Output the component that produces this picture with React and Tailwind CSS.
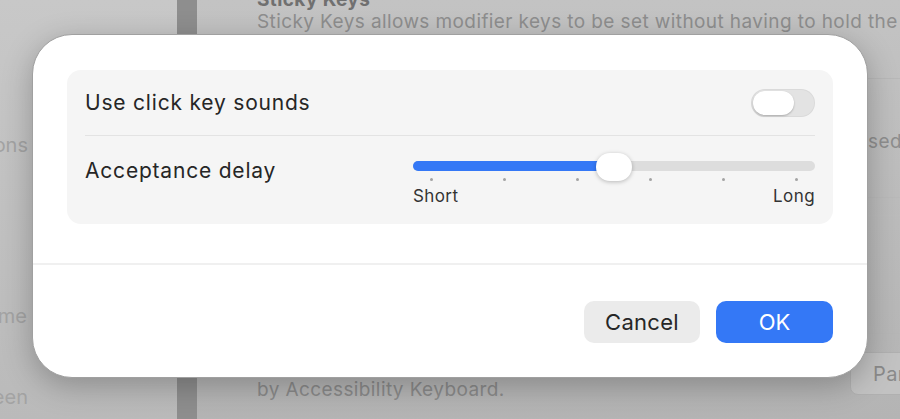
import React from 'react';

const font = { fontFamily: 'Inter, "Noto Sans", sans-serif' };

function Toggle() {
    return (
        <div className="w-[64px] h-[28px] rounded-full bg-[#e3e3e3] flex items-center px-[2px] shadow-[inset_0_0_0_1px_rgba(0,0,0,0.04)]">
            <div className="w-[41px] h-[24px] rounded-full bg-white shadow-[0_1px_2px_rgba(0,0,0,0.25)]"></div>
        </div>
    );
}

function Slider() {
    const ticks = [0, 1, 2, 3, 4, 5];
    return (
        <div className="flex flex-col w-[402px]">
            <div className="relative h-[24px]">
                <div className="absolute left-0 right-0 top-[8px] h-[10px] rounded-full bg-[#dddddd]"></div>
                <div className="absolute left-0 top-[8px] h-[10px] w-1/2 rounded-full bg-[#3478f6]"></div>
                <div className="absolute left-[183px] top-0 w-[36px] h-[28px] rounded-full bg-white shadow-[0_1px_4px_rgba(0,0,0,0.25)]"></div>
            </div>
            <div className="flex justify-between px-[17px] mt-[1px] h-[3px]">
                {ticks.map((t) => (
                    <div key={t} className="w-[3px] h-[3px] rounded-full bg-[#a3a3a3]"></div>
                ))}
            </div>
            <div className="flex justify-between mt-[5px] text-[17px] leading-[20px] tracking-[0.4px] text-[#333333]">
                <span>Short</span>
                <span>Long</span>
            </div>
        </div>
    );
}

export default function App() {
    return (
        <div className="relative w-[900px] h-[419px] overflow-hidden" style={font}>
            {/* dimmed settings window behind */}
            <div className="flex h-full">
                <div className="w-[177px] bg-gradient-to-b from-[#c8c8c8] to-[#bababa] flex flex-col text-[20px] leading-[28px] text-[#a3a3a3]">
                    <div className="mt-[131px] ml-[-72px] w-[100px] text-right">Captions</div>
                    <div className="mt-[143px] ml-[-73px] w-[100px] text-right">Home</div>
                    <div className="mt-[53px] ml-[-72px] w-[100px] text-right">Screen</div>
                </div>
                <div className="w-[20px] bg-[#8e8e8e]"></div>
                <div className="flex-1 bg-gradient-to-b from-[#c3c3c3] to-[#b4b4b4] flex flex-col text-[19px] leading-[24px] tracking-[0.4px]">
                    <div className="h-[36px] pl-[60px]">
                        <div className="mt-[-12px] font-bold text-[#707070] whitespace-nowrap">Sticky Keys</div>
                        <div className="mt-[-2px] text-[#8e8e8e] whitespace-nowrap">Sticky Keys allows modifier keys to be set without having to hold the</div>
                    </div>
                    <div className="h-[42px]"></div>
                    <div className="h-px bg-[#b8b8b8]"></div>
                    <div className="h-[118px] pt-[51px] flex justify-end text-[#8e8e8e] whitespace-nowrap">
                        <span className="mr-[-2px]">used</span>
                    </div>
                    <div className="h-px bg-[#b9b9b9]"></div>
                    <div className="h-[17px]"></div>
                    <div className="h-px bg-[#bcbcbc]"></div>
                    <div className="h-[117px]"></div>
                    <div className="h-px bg-[#b6b6b6]"></div>
                    <div className="flex items-start justify-between pl-[60px] mt-[18px]">
                        <div className="mt-[26px] text-[#8a8a8a] whitespace-nowrap">by Accessibility Keyboard.</div>
                        <div className="mr-[-50px] w-[100px] h-[43px] rounded-[8px] bg-[#c2c2c2] border border-[#b0b0b0] text-[20px] leading-[28px] text-[#8a8a8a] pl-[22px] pt-[7px] whitespace-nowrap">Panel</div>
                    </div>
                </div>
            </div>

            {/* sheet dialog */}
            <div className="absolute left-[32px] top-[34px] w-[836px] h-[344px] bg-white rounded-[40px] border border-[#a0a0a0] shadow-[0_8px_30px_rgba(0,0,0,0.25)] flex flex-col">
                <div className="mx-[34px] mt-[35px] rounded-[14px] bg-[#f5f5f5] flex flex-col">
                    <div className="h-[65px] flex items-center justify-between px-[18px]">
                        <span className="text-[21px] tracking-[0.8px] text-[#262626]">Use click key sounds</span>
                        <Toggle />
                    </div>
                    <div className="mx-[18px] h-px bg-[#e3e3e3]"></div>
                    <div className="h-[88px] flex px-[18px]">
                        <div className="w-[328px] pt-[19px] text-[21px] tracking-[0.8px] text-[#262626]">Acceptance delay</div>
                        <div className="pt-[17px]">
                            <Slider />
                        </div>
                    </div>
                </div>
                <div className="mt-[39px] h-[2px] bg-[#f0f0f0]"></div>
                <div className="flex justify-end gap-[16px] pr-[34px] mt-[36px]">
                    <button className="w-[116px] h-[42px] rounded-[10px] bg-[#ebebeb] text-[22px] tracking-[0.3px] text-[#262626]">Cancel</button>
                    <button className="w-[117px] h-[42px] rounded-[10px] bg-[#3478f6] text-[22px] text-white">OK</button>
                </div>
            </div>
        </div>
    );
}
